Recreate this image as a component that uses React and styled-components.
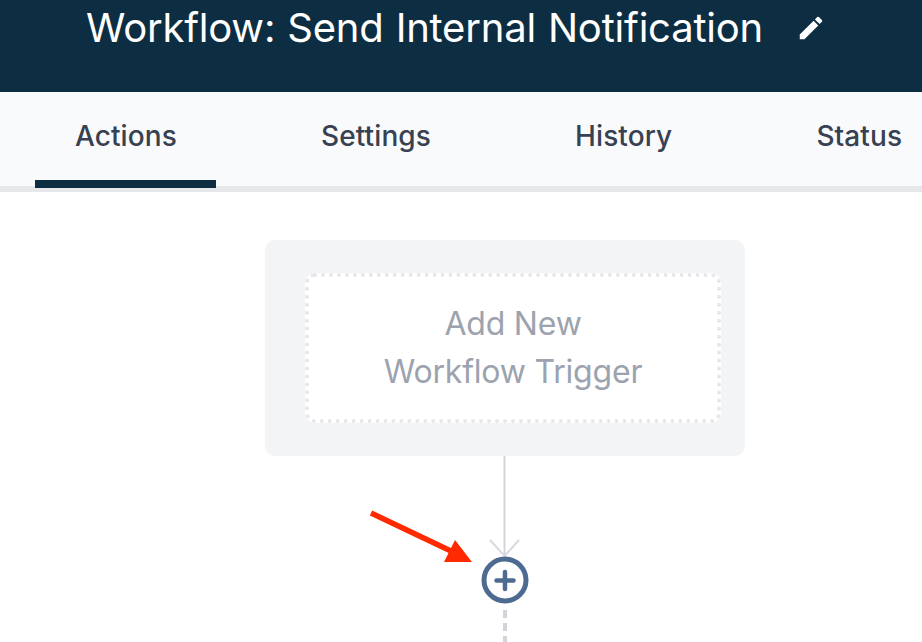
import React from "react";
import styled, { createGlobalStyle } from "styled-components";

const Global = createGlobalStyle`
  html, body { margin: 0; padding: 0; background: #fff; }
  body { font-family: Inter, "Liberation Sans", sans-serif; overflow: hidden; }
`;
const Page = styled.div`
  position: relative;
  width: 922px;
  height: 642px;
  overflow: hidden;
  background: #fff;
`;
const Header = styled.header`
  height: 92px;
  box-sizing: border-box;
  background: #0d2e42;
  display: flex;
  align-items: flex-start;
  padding: 4px 0 0 86px;
  gap: 33px;
`;
const Title = styled.h1`
  margin: 0;
  font-size: 40px;
  line-height: 48px;
  letter-spacing: -0.2px;
  word-spacing: 1px;
  font-weight: 400;
  color: #fff;
  white-space: nowrap;
`;
const EditIcon = styled.svg`
  width: 30px;
  height: 30px;
  margin-top: 9px;
  fill: #fff;
`;
const TabBar = styled.nav`
  height: 100px;
  box-sizing: border-box;
  background: #f9fafb;
  border-bottom: 6px solid #e5e7eb;
  display: flex;
  gap: 64.6px;
  padding-left: 35px;
`;
const Tab = styled.div`
  height: 96px;
  box-sizing: border-box;
  padding: 0 39.5px 0 40px;
  display: flex;
  align-items: center;
  flex: none;
  font-size: 28px;
  letter-spacing: 0.1px;
  font-weight: 500;
  color: #374151;
  border-bottom: 8px solid ${p => (p.$active ? "#0d2e42" : "transparent")};
`;
const Canvas = styled.main`
  padding: 48px 0 0 265px;
`;
const TriggerCard = styled.section`
  width: 480px;
  height: 216px;
  box-sizing: border-box;
  padding: 33px 24px 33px 40px;
  background: #f3f4f6;
  border-radius: 10px;
`;
const TriggerBox = styled.div`
  height: 150px;
  box-sizing: border-box;
  background: #fff;
  border: 4px dotted #e5e7eb;
  border-radius: 10px;
  display: flex;
  align-items: center;
  justify-content: center;
  text-align: center;
  font-size: 32px;
  line-height: 48px;
  letter-spacing: -0.2px;
  color: #9ca3af;
`;
const Connector = styled.svg`
  display: block;
  width: 60px;
  height: 186px;
  margin-left: 210px;
`;
const Callout = styled.svg`
  position: absolute;
  left: 360px;
  top: 500px;
  width: 130px;
  height: 80px;
`;

export default function App() {
  return (
    <Page>
      <Global />
      <Header>
        <Title>Workflow: Send Internal Notification</Title>
        <EditIcon viewBox="0 0 24 24">
          <path d="M3 17.25V21h3.75L17.81 9.94l-3.75-3.75L3 17.25zM20.71 7.04a1 1 0 0 0 0-1.41l-2.34-2.34a1 1 0 0 0-1.41 0l-1.83 1.83 3.75 3.75 1.83-1.83z" />
        </EditIcon>
      </Header>
      <TabBar>
        <Tab $active>Actions</Tab>
        <Tab>Settings</Tab>
        <Tab>History</Tab>
        <Tab>Status</Tab>
      </TabBar>
      <Canvas>
        <TriggerCard>
          <TriggerBox>
            <div>Add New<br />Workflow Trigger</div>
          </TriggerBox>
        </TriggerCard>
        <Connector viewBox="0 0 60 186" fill="none">
          <path d="M29.5 0V100" stroke="#d1d5db" strokeWidth="2" />
          <path d="M15 84L29.5 100L44 84" stroke="#d8dae0" strokeWidth="2" />
          <circle cx="30" cy="124" r="21" fill="#fff" stroke="#4d6b91" strokeWidth="5" />
          <path d="M21.5 124.5H38.5M30 116V133" stroke="#4d6b91" strokeWidth="4.5" strokeLinecap="round" />
          <path d="M30 154V186" stroke="#d1d5db" strokeWidth="4" strokeDasharray="8 5" />
        </Connector>
      </Canvas>
      <Callout viewBox="0 0 130 80" fill="none">
        <path d="M11 13L93 52" stroke="#ff2a00" strokeWidth="5.5" />
        <path d="M112 62L84 62L95 40Z" fill="#ff2a00" />
      </Callout>
    </Page>
  );
}
